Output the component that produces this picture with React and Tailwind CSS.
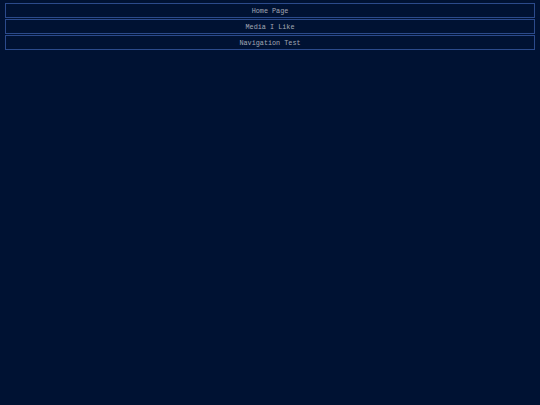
const links = ["Home Page", "Media I Like", "Navigation Test"];

export default function App() {
  return (
    <div className="min-h-screen w-full bg-[#001233] px-[5px] pt-[3px]">
      <nav className="flex flex-col gap-[1px]">
        {links.map((label) => (
          <a
            key={label}
            href="#"
            className="flex h-[15px] items-center justify-center border border-[#2b4a8b] pt-[1px] text-[6.8px] leading-none text-[#a3a8b3] font-['Liberation_Mono',monospace]"
          >
            {label}
          </a>
        ))}
      </nav>
    </div>
  );
}
